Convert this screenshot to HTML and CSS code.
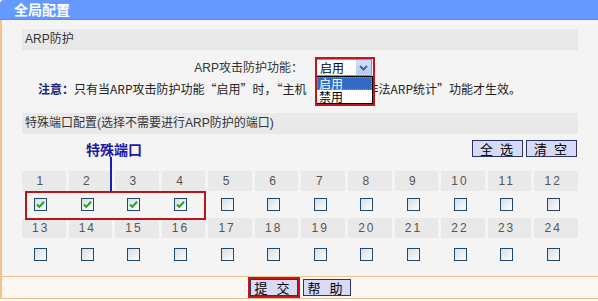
FILE: index.html
```html
<!DOCTYPE html>
<html lang="zh-CN">
<head>
    <meta charset="UTF-8">
    <title>全局配置</title>
    <link rel="stylesheet" href="styles.css">
</head>
<body>
    <div class="title">全局配置</div>
    <div class="main">
        <div class="content">
            <div class="bar">ARP防护</div>
            <div class="func-row">
                <span class="func-label">ARP攻击防护功能：</span>
                <div class="select">
                    <span class="select-value">启用</span>
                    <span class="select-arrow">
                        <svg width="9" height="6" viewBox="0 0 9 6"><path d="M1 1l3.5 3.5L8 1" fill="none" stroke="#4d6185" stroke-width="2"/></svg>
                    </span>
                    <ul class="select-list">
                        <li class="on">启用</li>
                        <li>禁用</li>
                    </ul>
                    <span class="mark-select"></span>
                </div>
            </div>
            <p class="note"><b>注意：</b>只有当ARP攻击防护功能“启用”时，“主机<span class="covered">监控”中“</span>非法ARP统计”功能才生效。</p>
            <div class="bar">特殊端口配置(选择不需要进行ARP防护的端口)</div>
            <div class="tools">
                <span class="callout">特殊端口</span>
                <div class="tool-btns">
                    <button class="tool-btn">全 选</button>
                    <button class="tool-btn">清 空</button>
                </div>
            </div>
            <div class="ports">
                <div class="num">1</div><div class="num">2</div><div class="num">3</div><div class="num">4</div>
                <div class="num">5</div><div class="num">6</div><div class="num">7</div><div class="num">8</div>
                <div class="num">9</div><div class="num">10</div><div class="num">11</div><div class="num">12</div>

                <div class="chk-cell"><span class="chk"><svg width="11" height="11" viewBox="0 0 11 11"><path d="M2 5.5l2.3 2.4L9 2.8" fill="none" stroke="#24a024" stroke-width="2"/></svg></span></div>
                <div class="chk-cell"><span class="chk"><svg width="11" height="11" viewBox="0 0 11 11"><path d="M2 5.5l2.3 2.4L9 2.8" fill="none" stroke="#24a024" stroke-width="2"/></svg></span></div>
                <div class="chk-cell"><span class="chk"><svg width="11" height="11" viewBox="0 0 11 11"><path d="M2 5.5l2.3 2.4L9 2.8" fill="none" stroke="#24a024" stroke-width="2"/></svg></span></div>
                <div class="chk-cell"><span class="chk"><svg width="11" height="11" viewBox="0 0 11 11"><path d="M2 5.5l2.3 2.4L9 2.8" fill="none" stroke="#24a024" stroke-width="2"/></svg></span></div>
                <div class="chk-cell"><span class="chk"></span></div>
                <div class="chk-cell"><span class="chk"></span></div>
                <div class="chk-cell"><span class="chk"></span></div>
                <div class="chk-cell"><span class="chk"></span></div>
                <div class="chk-cell"><span class="chk"></span></div>
                <div class="chk-cell"><span class="chk"></span></div>
                <div class="chk-cell"><span class="chk"></span></div>
                <div class="chk-cell"><span class="chk"></span></div>

                <div class="num">13</div><div class="num">14</div><div class="num">15</div><div class="num">16</div>
                <div class="num">17</div><div class="num">18</div><div class="num">19</div><div class="num">20</div>
                <div class="num">21</div><div class="num">22</div><div class="num">23</div><div class="num">24</div>

                <div class="chk-cell last"><span class="chk"></span></div>
                <div class="chk-cell last"><span class="chk"></span></div>
                <div class="chk-cell last"><span class="chk"></span></div>
                <div class="chk-cell last"><span class="chk"></span></div>
                <div class="chk-cell last"><span class="chk"></span></div>
                <div class="chk-cell last"><span class="chk"></span></div>
                <div class="chk-cell last"><span class="chk"></span></div>
                <div class="chk-cell last"><span class="chk"></span></div>
                <div class="chk-cell last"><span class="chk"></span></div>
                <div class="chk-cell last"><span class="chk"></span></div>
                <div class="chk-cell last"><span class="chk"></span></div>
                <div class="chk-cell last"><span class="chk"></span></div>

                <span class="mark-ports"></span>
            </div>
        </div>
        <div class="footer">
            <button class="btn marked">提 交</button>
            <button class="btn">帮 助</button>
        </div>
    </div>
</body>
</html>
```

FILE: styles.css
```css
body {
    margin: 0;
    width: 598px;
    height: 301px;
    overflow: hidden;
    background-color: #fff;
    font-family: "Liberation Sans", "Noto Sans CJK SC", sans-serif;
    font-size: 12px;
    color: #222;
}
.title {
    height: 20px;
    line-height: 20px;
    padding-left: 14px;
    background-color: #6699ff;
    border-bottom: 1px solid #5b89e6;
    border-top-left-radius: 4px;
    color: #fff;
    font-size: 14px;
    font-weight: bold;
    box-sizing: border-box;
}
.main {
    border-left: 2px solid #f2c48c;
    background-color: #f4f4f4;
}
.content {
    padding: 9px 20px 6px 20px;
}
.bar {
    height: 21px;
    line-height: 21px;
    padding-left: 3px;
    background-color: #e9e9e9;
    color: #333;
}
.func-row {
    display: flex;
    align-items: flex-start;
    height: 28px;
    padding-top: 9px;
    box-sizing: border-box;
}
.func-label {
    width: 281px;
    text-align: right;
    margin-right: 13px;
    line-height: 18px;
    color: #333;
}
.select {
    position: relative;
    display: flex;
    align-items: center;
    width: 56px;
    height: 17px;
    border: 1px solid #7f9db9;
    background-color: #fff;
    box-sizing: border-box;
    z-index: 2;
}
.select-value {
    flex: 1;
    padding-left: 3px;
    font-family: "Noto Sans CJK SC", sans-serif;
    line-height: 15px;
    color: #000;
}
.select-arrow {
    display: flex;
    justify-content: center;
    align-items: center;
    width: 15px;
    height: 15px;
    background: linear-gradient(#d2e0fb, #b4c9f3);
    border: 1px solid #c3d3f7;
    box-sizing: border-box;
}
.select-list {
    position: absolute;
    top: 16px;
    left: -1px;
    width: 57px;
    margin: 0;
    padding: 0;
    list-style: none;
    background-color: #fff;
    border: 1px solid #000;
    box-sizing: border-box;
}
.select-list li {
    height: 13px;
    line-height: 13px;
    padding-left: 2px;
    font-family: "Noto Sans CJK SC", sans-serif;
    color: #000;
}
.select-list li.on {
    background-color: #316ac5;
    color: #fff;
    outline: 1px dotted #999;
    outline-offset: -1px;
}
.mark-select {
    position: absolute;
    top: -3px;
    left: -2px;
    width: 60px;
    height: 49px;
    border: 2px solid #c4141c;
    box-sizing: border-box;
    pointer-events: none;
}
.note {
    margin: 0 0 13px 0;
    padding-left: 16px;
    height: 22px;
    line-height: 22px;
    font-family: "Noto Sans CJK SC", sans-serif;
    color: #222;
    white-space: nowrap;
}
.note b {
    color: #1a2a80;
}
.covered {
    visibility: hidden;
}
.tools {
    display: flex;
    justify-content: space-between;
    align-items: flex-start;
    height: 37px;
}
.callout {
    position: relative;
    z-index: 1;
    margin: 8px 0 0 64px;
    font-size: 14px;
    font-weight: bold;
    line-height: 16px;
    color: #1a1aa0;
}
.callout::after {
    content: "";
    position: absolute;
    left: 24px;
    top: 15px;
    width: 2px;
    height: 35px;
    background-color: #1e1ea8;
}
.tool-btns {
    display: flex;
    gap: 3px;
    margin-top: 6px;
    margin-right: 1px;
}
.tool-btn {
    width: 51px;
    height: 17px;
    padding: 0;
    font-family: "Noto Sans CJK SC", sans-serif;
    font-size: 13px;
    line-height: 15px;
    letter-spacing: 2px;
    color: #000;
    background-color: #d6daf6;
    border: 1px solid #2e3266;
}
.ports {
    position: relative;
    display: grid;
    grid-template-columns: repeat(12, 1fr);
    column-gap: 3px;
}
.num {
    height: 20px;
    line-height: 20px;
    padding-right: 6px;
    text-align: center;
    background-color: #e9e9e9;
    color: #555;
    letter-spacing: 2px;
}
.chk-cell {
    display: flex;
    justify-content: center;
    align-items: center;
    height: 27px;
    padding-right: 6px;
}
.chk-cell.last {
    height: 32px;
}
.chk {
    display: flex;
    justify-content: center;
    align-items: center;
    width: 13px;
    height: 13px;
    border: 1px solid #1f4a6e;
    background: linear-gradient(135deg, #d8dde2, #fdfdfd);
    box-sizing: border-box;
}
.mark-ports {
    position: absolute;
    left: 3px;
    top: 20px;
    width: 181px;
    height: 29px;
    border: 2px solid #b8141c;
    box-sizing: border-box;
}
.footer {
    display: flex;
    justify-content: center;
    align-items: center;
    gap: 5px;
    height: 23px;
    background-color: #fdf7f2;
    border-top: 1px solid #f0c48e;
    border-bottom: 1px solid #e8bf8c;
    box-sizing: border-box;
}
.btn {
    width: 48px;
    height: 17px;
    padding: 0;
    font-family: "Noto Sans CJK SC", sans-serif;
    font-size: 13px;
    line-height: 15px;
    letter-spacing: 3px;
    color: #000;
    background-color: #d8daf6;
    border: 1px solid #2e3266;
}
.btn.marked {
    outline: 2px solid #c4141c;
    outline-offset: 0;
}
```
